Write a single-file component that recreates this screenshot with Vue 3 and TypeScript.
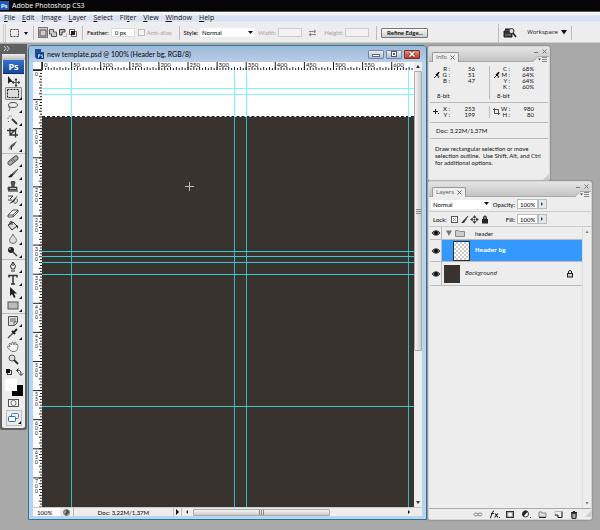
<script setup lang="ts">
import { ref } from 'vue'

interface Tool {
  name: string
  svg: string
  flyout?: boolean
}

const menus: [string, string, string][] = [
  ['', 'F', 'ile'],
  ['', 'E', 'dit'],
  ['', 'I', 'mage'],
  ['', 'L', 'ayer'],
  ['', 'S', 'elect'],
  ['Fil', 't', 'er'],
  ['', 'V', 'iew'],
  ['', 'W', 'indow'],
  ['', 'H', 'elp'],
]

const toolGroups: Tool[][] = [
  [
    { name: 'Move', svg: '<path d="M2 1v8l2-2 3 0z" fill="#222"/><path d="M10 4v7M6.500 7.500h7M10 3.500l-1 1.500h2zM10 11.500l-1-1.500h2zM6 7.500l1.500-1v2zM14 7.500l-1.500-1v2z" stroke="#333" fill="#333" stroke-width=".8"/>' },
    { name: 'Marquee', flyout: true, svg: '<rect x="1.500" y="1.500" width="11" height="8" fill="none" stroke="#222" stroke-dasharray="2 1"/>' },
    { name: 'Lasso', flyout: true, svg: '<ellipse cx="7" cy="4" rx="4.500" ry="2.500" fill="none" stroke="#555"/><path d="M3 5c-1 2 2 2 1 3s-1 1-1 2" fill="none" stroke="#444"/>' },
    { name: 'Quick Selection', flyout: true, svg: '<path d="M6 5l5 5" stroke="#333" stroke-width="1.800"/><path d="M2 5a3 3 0 0 1 4-3M2 7l1 1" fill="none" stroke="#666" stroke-dasharray="1.500 1"/>' },
    { name: 'Crop', svg: '<path d="M4 1v7h8M1 3.500h8.500v7M4 8l7-7" fill="none" stroke="#333" stroke-width="1.300"/>' },
    { name: 'Slice', flyout: true, svg: '<path d="M2 10l3-5 6-4-3 5z" fill="#555"/><path d="M2 10l5-4" stroke="#ddd" stroke-width=".7"/><path d="M6 6l-1 4" stroke="#222"/>' },
  ],
  [
    { name: 'Healing Brush', flyout: true, svg: '<path d="M4 8l6-5" stroke="#555" stroke-width="5" stroke-linecap="round"/><path d="M4 8l6-5" stroke="#aaa" stroke-width="3.200" stroke-linecap="round"/><path d="M5 5l3 3M7 4l2 3" stroke="#555" stroke-width=".8"/>' },
    { name: 'Brush', flyout: true, svg: '<path d="M12 1L6 6l1 1z" fill="#555" stroke="#555"/><path d="M6 6c-2 0-2 2-4 3 2 1 5 0 5-2z" fill="#222"/>' },
    { name: 'Clone Stamp', flyout: true, svg: '<path d="M5.500 3a2 2 0 1 1 3 0l-.5 3h3v3H2V6h4z" fill="#555" stroke="#222" stroke-width=".6"/><path d="M2 10h10" stroke="#222"/><path d="M4 7.500h6" stroke="#ccc"/>' },
    { name: 'History Brush', flyout: true, svg: '<path d="M12 1L6 7 3 10l5-2z" fill="#444"/><path d="M2 2h5l-3 3M2 6h4M8 9c3 1 4-2 3-4" fill="none" stroke="#444"/>' },
    { name: 'Eraser', flyout: true, svg: '<path d="M2 8l5-5h5L7 8zM2 8v2h5V8M7 10l5-5V3" fill="#eee" stroke="#444" stroke-width=".9"/>' },
    { name: 'Paint Bucket', flyout: true, svg: '<path d="M2 5l5-3 4 4-5 4z" fill="#ddd" stroke="#333"/><path d="M4 5V2c0-1 2-1 2 0v3" fill="none" stroke="#333"/><path d="M10 5c3 0 2 3 2 4l-2-3z" fill="#222"/>' },
    { name: 'Blur', flyout: true, svg: '<path d="M7 1C6 4 3.500 5 3.500 7.500a3.500 3 0 0 0 7 0C10.500 5 8 4 7 1z" fill="#ddd" stroke="#666" stroke-width=".9"/>' },
    { name: 'Dodge', flyout: true, svg: '<circle cx="5" cy="4" r="3" fill="#222"/><path d="M7 6l4 4" stroke="#444" stroke-width="1.500"/><circle cx="4" cy="3" r="1" fill="#999"/>' },
  ],
  [
    { name: 'Pen', flyout: true, svg: '<path d="M7 1L4.500 5l1 3h3l1-3z" fill="#eee" stroke="#333"/><path d="M7 1v4M5 10h4" stroke="#333"/>' },
    { name: 'Type', flyout: true, svg: '<path d="M3 3.500v-2h8v2M7 1.500v8.500M5 10h4" fill="none" stroke="#333" stroke-width="1.500"/>' },
    { name: 'Path Selection', flyout: true, svg: '<path d="M4 0v9l2-2 2 4 1.500-1L8 6.500h3z" fill="#222"/>' },
    { name: 'Rectangle', flyout: true, svg: '<rect x="2" y="2" width="10" height="7" fill="#bbb" stroke="#555"/>' },
  ],
  [
    { name: 'Notes', flyout: true, svg: '<path d="M2.500 1.500h9v6l-3 3h-6z" fill="#ddd" stroke="#555"/><path d="M4 4h6M4 6h6M8 10V7h3" stroke="#666" fill="none"/>' },
    { name: 'Eyedropper', flyout: true, svg: '<path d="M2 10l5-5" stroke="#555" stroke-width="1.500"/><path d="M6 3l3 3M8 4l3-3" stroke="#222" stroke-width="2"/>' },
    { name: 'Hand', svg: '<path d="M4 9C1 7 1 5 2 5l2 1-1-3 1-1 1.500 2L6 1h1l1 3 1-3 1 .5V4l1-1 1 1c0 4-1 6-3 6.500H6z" fill="#f4f4f4" stroke="#666" stroke-width=".8"/>' },
    { name: 'Zoom', svg: '<circle cx="6" cy="4" r="3" fill="#ddd" stroke="#555"/><path d="M8 6l4 4" stroke="#333" stroke-width="2"/>' },
  ],
]

const STEP = 29.1
const labels = (count: number) => Array.from({ length: count }, (_, i) => ({ at: i * STEP, label: String(i * 50) }))
const columnsMajor = labels(13)
const rowsMajor = labels(15)
const minors = Array.from({ length: 160 }, (_, i) => ({ at: (i * STEP) / 10, len: i % 2 ? 2 : 3 }))

const verticalGuides = [29, 192, 204, 366]
const horizontalGuides = [18, 24, 181, 186, 192, 204, 336]

const footIcons: Tool[] = [
  { name: 'Link layers', svg: '<path d="M1 5.500a2 1.500 0 1 0 4 0a2 1.500 0 1 0-4 0M5 5.500a2 1.500 0 1 0 4 0a2 1.500 0 1 0-4 0" fill="none" stroke="#888"/>' },
  { name: 'Layer style', svg: '<path d="M1 9c1.500 0 1.500-7 4-7M2 4.500h3M6 4.500l3 4M9 4.500l-3.500 4" fill="none" stroke="#222" stroke-width="1.100"/><rect x="10" y="8" width="1" height="1" fill="#222"/>' },
  { name: 'Layer mask', svg: '<rect x="1.500" y="2.500" width="7" height="6" fill="#999" stroke="#333"/><circle cx="5" cy="5.500" r="2" fill="#fff"/>' },
  { name: 'Adjustment layer', svg: '<circle cx="4.500" cy="5" r="3" fill="#fff" stroke="#333"/><path d="M6.800 2.500A3.300 3.300 0 0 0 2.500 7.500z" fill="#222"/><rect x="9" y="8" width="1" height="1" fill="#222"/>' },
  { name: 'New group', svg: '<path d="M2 3h3v1h4v4H2z" fill="#ddd" stroke="#888"/><path d="M2 8.500h7" stroke="#222"/>' },
  { name: 'New layer', svg: '<path d="M2 2.500h7v6H5L2 6z" fill="#eee" stroke="#bbb"/><path d="M2 6h3v2.500h4v-6" fill="none" stroke="#222"/>' },
  { name: 'Delete layer', svg: '<path d="M2 3.500h6M4 2.500h2" stroke="#222"/><path d="M2.500 4.500h5l-.5 5H3z" fill="#777" stroke="#333"/><path d="M5 5v4" stroke="#ddd"/>' },
]

const modes: Tool[] = [
  { name: 'New selection', svg: '<rect x="2" y="2" width="6" height="6" fill="#ccc" stroke="#555"/>' },
  { name: 'Add to selection', svg: '<path d="M1.500 1.500h4v2.500h3v4.500h-5V6h-2z" fill="#ccc" stroke="#555"/>' },
  { name: 'Subtract from selection', svg: '<path d="M1.500 7V1.500H7V4H4v3z" fill="#bbb" stroke="#444"/><path d="M5 8.500h3.500V5" fill="none" stroke="#bbb"/>' },
  { name: 'Intersect selection', svg: '<path d="M1.500 1.500h5v5h-5zM3.500 3.500h5v5h-5z" fill="none" stroke="#666"/><rect x="3" y="3" width="4" height="4" fill="#222"/>' },
]

const eye = '<path d="M1 4c2-3 6-3 8 0-2 3-6 3-8 0z" fill="#777" stroke="#222" stroke-width=".8"/><circle cx="5" cy="4" r="2" fill="#111"/>'

const feather = ref('0 px')
const opacity = ref('100%')
const fill = ref('100%')
</script>

<template>
  <div class="app">
    <header class="titlebar">
      <svg class="logo" width="9" height="9" viewBox="0 0 9 9"><rect width="9" height="9" fill="#1e5cb3" /><text x="1" y="7" font-size="6" fill="#fff">Ps</text></svg>
      <h1>Adobe Photoshop CS3</h1>
    </header>

    <nav class="menubar">
      <a v-for="m in menus" :key="m.join('')" href="#">{{ m[0] }}<u>{{ m[1] }}</u>{{ m[2] }}</a>
    </nav>

    <section class="options">
      <i class="grip"></i>
      <button class="preset" aria-label="Tool preset">
        <svg width="20" height="10" viewBox="0 0 20 10"><rect x="1.500" y="1.500" width="8" height="7" fill="none" stroke="#444" stroke-dasharray="2 1" /><path d="M15 4h4l-2 3z" fill="#111" /></svg>
      </button>
      <i class="rule"></i>
      <div class="modes">
        <button v-for="(m, i) in modes" :key="m.name" :class="{ on: i === 0 }" :aria-label="m.name"><svg width="10" height="10" viewBox="0 0 10 10" v-html="m.svg"></svg></button>
      </div>
      <i class="rule"></i>
      <label class="field">Feather: <input v-model="feather" class="box" /></label>
      <label class="field dim"><input type="checkbox" disabled /> Anti-alias</label>
      <i class="rule"></i>
      <label class="field">Style:
        <span class="pick"><select><option>Normal</option></select><svg width="6" height="4" viewBox="0 0 6 4"><path d="M1 0h5L3.500 3z" fill="#111" /></svg></span>
      </label>
      <label class="field dim">Width: <input class="box off" disabled /></label>
      <button class="swap" aria-label="Swap width and height"><svg width="9" height="8" viewBox="0 0 9 8"><path d="M1 2.500h6M2 5.500h6M6 1l2 1.500L6 4M3 4L1 5.500 3 7" fill="none" stroke="#888" /></svg></button>
      <label class="field dim">Height: <input class="box off" disabled /></label>
      <i class="rule"></i>
      <button class="refine">Refine Edge...</button>
      <i class="rule push"></i>
      <button class="bridge" aria-label="Go to Bridge"><svg width="14" height="12" viewBox="0 0 14 12"><path d="M1 4h8v6H1z" fill="#333" stroke="#222" /><path d="M2 2.500h5" stroke="#222" stroke-width="2" /><path d="M2 8h6" stroke="#888" /><circle cx="8.500" cy="4" r="2.500" fill="#ddd" stroke="#333" /><path d="M10 6l3 4" stroke="#222" stroke-width="1.500" /></svg></button>
      <button class="workspace-menu">Workspace <svg width="6" height="5" viewBox="0 0 6 5"><path d="M0 0h6L3 4.500z" fill="#111" /></svg></button>
      <i class="rule last"></i>
    </section>

    <main class="desk">
      <aside class="tools">
        <div class="tools-head"><svg width="8" height="5" viewBox="0 0 8 5"><path d="M1 0l2 2.500L1 5M4 0l2 2.500L4 5" fill="none" stroke="#ddd" /></svg></div>
        <div class="tools-body">
          <div class="tools-grip"></div>
          <div class="ps">Ps</div>
          <div v-for="(group, g) in toolGroups" :key="g" class="group">
            <button v-for="t in group" :key="t.name" :aria-label="t.name" :class="{ on: t.name === 'Marquee' }">
              <svg width="18" height="12" viewBox="0 0 18 12"><g transform="translate(1 0)" v-html="t.svg"></g><path v-if="t.flyout" d="M17 9v3h-3z" fill="#111" /></svg>
            </button>
          </div>
          <svg class="colors" width="20" height="31" viewBox="0 0 20 31">
            <rect x="3.500" y="4.500" width="4" height="4" fill="#fff" stroke="#444" /><rect x="2" y="3" width="4" height="4" fill="#111" />
            <path d="M13 4.500c3-1 4 1 4 4M14.500 2.500l-2 2 2 2M15 7.500l2 2 2-2" fill="none" stroke="#222" />
            <rect x="8" y="19" width="11" height="11" fill="#000" /><rect x="1" y="13" width="12" height="12" fill="#fff" />
          </svg>
          <button class="mask" aria-label="Quick mask"><svg width="12" height="9" viewBox="0 0 12 9"><rect x=".5" y=".5" width="10" height="7" fill="#eee" stroke="#555" /><circle cx="5.500" cy="4" r="2.500" fill="#fff" stroke="#777" /></svg></button>
          <button class="screen" aria-label="Screen mode"><svg width="14" height="12" viewBox="0 0 14 12"><rect x="4.500" y="1.500" width="7" height="5" rx="1" fill="#e5f0fa" stroke="#4585bd" /><rect x="1.500" y="4.500" width="7" height="5" rx="1" fill="#fff" stroke="#2869a8" /><path d="M14 9v3h-3z" fill="#111" /></svg></button>
        </div>
      </aside>

      <section class="doc">
        <div class="doc-title">
          <svg width="11" height="11" viewBox="0 0 11 11"><path d="M1 0h6v3h3v7H3L1 8z" fill="#164f9c" /><rect x="3" y="4" width="7" height="6" fill="#0c3d80" /><path d="M4.500 9V5.500h1.500v1.500H4.500M9 6H7.500v1h1v1.500h-1" fill="none" stroke="#cfe4ff" stroke-width=".8" /></svg>
          <h2>new template.psd @ 100% (Header bg, RGB/8)</h2>
          <div class="win-buttons">
            <button aria-label="Minimise"><svg width="14" height="8" viewBox="0 0 14 8"><rect x="3.500" y="4.500" width="7" height="2" fill="#fff" stroke="#667" /></svg></button>
            <button aria-label="Maximise"><svg width="14" height="8" viewBox="0 0 14 8"><rect x="4.500" y="1.500" width="5" height="5" fill="#fff" stroke="#556" /><rect x="6" y="3" width="2" height="2" fill="#556" /></svg></button>
            <button class="close" aria-label="Close"><svg width="14" height="8" viewBox="0 0 14 8"><path d="M4.500 1.500l5 5M9.500 1.500l-5 5" stroke="#622" stroke-width="3" /><path d="M4.500 1.500l5 5M9.500 1.500l-5 5" stroke="#fff" stroke-width="1.700" /></svg></button>
          </div>
        </div>
        <div class="doc-body">
          <div class="corner"></div>
          <div class="ruler-x">
            <svg width="100%" height="8">
              <path v-for="m in minors" :key="m.at" :d="`M${m.at + 0.5} ${8 - m.len}V8`" stroke="#222" />
              <g v-for="m in columnsMajor" :key="m.label"><path :d="`M${m.at + 0.5} 0V8`" stroke="#222" /><text :x="m.at + 2" y="5">{{ m.label }}</text></g>
            </svg>
          </div>
          <div class="ruler-y">
            <svg width="9" height="100%">
              <path v-for="m in minors" :key="m.at" :d="`M${9 - m.len} ${m.at + 0.5}H9`" stroke="#222" />
              <g v-for="m in rowsMajor" :key="m.label">
                <path :d="`M0 ${m.at + 0.5}H9`" stroke="#222" />
                <text :y="m.at + 1"><tspan v-for="(c, i) in m.label" :key="i" x="2" dy="5">{{ c }}</tspan></text>
              </g>
            </svg>
          </div>
          <div class="canvas">
            <div class="selection"></div>
            <i v-for="x in verticalGuides" :key="'v' + x" class="guide v" :style="{ left: x + 'px' }"></i>
            <i v-for="y in horizontalGuides" :key="'h' + y" class="guide h" :style="{ top: y + 'px' }"></i>
            <svg class="cross" width="9" height="9" viewBox="0 0 9 9"><path d="M4.500 0v9M0 4.500h9" stroke="#bbb" /></svg>
          </div>
          <div class="scroll-y">
            <svg width="8" height="9" viewBox="0 0 8 9"><path d="M2 6h4L4 3z" fill="#333" /></svg>
            <div class="thumb"><svg width="5" height="5" viewBox="0 0 5 5"><path d="M0 .5h5M0 2.500h5M0 4.500h5" stroke="#888" /></svg></div>
            <svg class="end" width="8" height="9" viewBox="0 0 8 9"><path d="M2 3h4L4 6z" fill="#333" /></svg>
          </div>
          <div class="status">
            <span class="zoom">100%</span>
            <span class="drive"><svg width="7" height="7" viewBox="0 0 7 7"><circle cx="3.500" cy="3.500" r="3" fill="#999" stroke="#777" /><path d="M3 2h2v2H3v2" stroke="#222" fill="none" /></svg></span>
            <span class="size">Doc: 3,22M/1,37M</span>
            <button class="play" aria-label="Status options"><svg width="5" height="6" viewBox="0 0 5 6"><path d="M1 0v6l3-3z" fill="#000" /></svg></button>
            <div class="scroll-x">
              <svg width="11" height="8" viewBox="0 0 11 8"><path d="M6 2v4L4 4z" fill="#333" /></svg>
              <div class="thumb"><svg width="5" height="5" viewBox="0 0 5 5"><path d="M.5 0v5M2.500 0v5M4.500 0v5" stroke="#888" /></svg></div>
              <svg class="end" width="11" height="8" viewBox="0 0 11 8"><path d="M5 2v4l2-2z" fill="#111" /></svg>
            </div>
          </div>
        </div>
      </section>

      <aside class="panels">
        <section class="panel info">
          <div class="panel-top">
            <h3>Info <svg width="5" height="5" viewBox="0 0 5 5"><path d="M.5 .5l4 4M4.500 .5l-4 4" stroke="#666" /></svg></h3>
            <svg width="16" height="15" viewBox="0 0 16 15"><path d="M1 5.500h4M9.500 2.500l4 4M13.500 2.500l-4 4" stroke="#777" /><path d="M0 15L5 9.500h11V15z" fill="#ededed" /><path d="M0 14.500L5 9.500h11" fill="none" stroke="#aaa" /><path d="M5 11.500h3l-1.500 2z" fill="#444" /><path d="M9 10.500h5M9 12.500h5M9 14.500h5" stroke="#888" /></svg>
          </div>
          <div class="readout colour">
            <div class="cell">
              <svg width="7" height="7" viewBox="0 0 7 7"><path d="M1 6l3-3M5 6l1-2" stroke="#333" /><path d="M3 2l2 2M4 3l2-3" stroke="#111" stroke-width="1.500" /></svg>
              <dl><dt>R :</dt><dd>56</dd><dt>G :</dt><dd>51</dd><dt>B :</dt><dd>47</dd></dl>
              <p>8-bit</p>
            </div>
            <div class="cell">
              <svg width="7" height="7" viewBox="0 0 7 7"><path d="M1 6l3-3M5 6l1-2" stroke="#333" /><path d="M3 2l2 2M4 3l2-3" stroke="#111" stroke-width="1.500" /></svg>
              <dl><dt>C :</dt><dd>68%</dd><dt>M :</dt><dd>64%</dd><dt>Y :</dt><dd>64%</dd><dt>K :</dt><dd>60%</dd></dl>
              <p>8-bit</p>
            </div>
          </div>
          <div class="readout place">
            <div class="cell">
              <svg width="7" height="7" viewBox="0 0 7 7"><path d="M2.500 1v5M0 3.500h5" stroke="#222" /><rect x="5" y="5" width="1" height="1" fill="#222" /></svg>
              <dl><dt>X :</dt><dd>253</dd><dt>Y :</dt><dd>199</dd></dl>
            </div>
            <div class="cell">
              <svg width="7" height="7" viewBox="0 0 7 7"><path d="M1.500 0v5.500H7M0 1.500h5.500V7" fill="none" stroke="#555" /></svg>
              <dl><dt>W :</dt><dd>980</dd><dt>H :</dt><dd>80</dd></dl>
            </div>
          </div>
          <p class="doc-size">Doc: 3,22M/1,37M</p>
          <p class="hint">Draw rectangular selection or move selection outline.&nbsp; Use Shift, Alt, and Ctrl for additional options.</p>
          <svg class="resize" width="6" height="6" viewBox="0 0 6 6"><path d="M0 6l6-6v6z" fill="#ccc" /></svg>
        </section>

        <section class="panel layers">
          <div class="panel-top">
            <h3>Layers <svg width="5" height="5" viewBox="0 0 5 5"><path d="M.5 .5l4 4M4.500 .5l-4 4" stroke="#666" /></svg></h3>
            <svg width="16" height="15" viewBox="0 0 16 15"><path d="M1 5.500h4M9.500 2.500l4 4M13.500 2.500l-4 4" stroke="#777" /><path d="M0 15L5 9.500h11V15z" fill="#ededed" /><path d="M0 14.500L5 9.500h11" fill="none" stroke="#aaa" /><path d="M5 11.500h3l-1.500 2z" fill="#444" /><path d="M9 10.500h5M9 12.500h5M9 14.500h5" stroke="#888" /></svg>
          </div>
          <div class="line">
            <span class="pick wide"><select aria-label="Blend mode"><option>Normal</option></select><svg width="6" height="4" viewBox="0 0 6 4"><path d="M1 0h5L3.500 3z" fill="#111" /></svg></span>
            <label class="amount">Opacity: <input v-model="opacity" /></label>
            <button class="step" aria-label="Opacity slider"><svg width="3" height="4" viewBox="0 0 3 4"><path d="M0 0v4l2-2z" fill="#347" /></svg></button>
          </div>
          <div class="line">
            <span class="lock">Lock:</span>
            <svg width="38" height="9" viewBox="0 0 38 9">
              <rect x="1.500" y="1.500" width="6" height="6" fill="#fff" stroke="#555" /><path d="M3 3h1v1H3zM5 3h1v1H5zM4 4h1v1H4zM3 5h1v1H3zM5 5h1v1H5z" fill="#999" />
              <path d="M18 1l-4 4 1 1z" fill="#555" stroke="#555" /><path d="M14 5c-1 0-1 2-3 3 2 0 4 0 4-2z" fill="#222" />
              <path d="M24.500 1v7M21 4.500h7M23 2.500l1.500-2 1.500 2zM23 6.500l1.500 2 1.500-2zM22.500 3l-2 1.500 2 1.500zM26.500 3l2 1.500-2 1.500z" fill="#333" stroke="#333" stroke-width=".5" />
              <rect x="32" y="4" width="6" height="4.500" fill="#222" /><path d="M33.500 4V2.500a1.500 1.500 0 0 1 3 0V4" fill="#777" stroke="#222" />
            </svg>
            <label class="amount">Fill: <input v-model="fill" /></label>
            <button class="step" aria-label="Fill slider"><svg width="3" height="4" viewBox="0 0 3 4"><path d="M0 0v4l2-2z" fill="#347" /></svg></button>
          </div>
          <div class="stack">
            <ul>
              <li class="folder">
                <button aria-label="Toggle header"><svg width="10" height="8" viewBox="0 0 10 8" v-html="eye"></svg></button>
                <div><svg width="20" height="9" viewBox="0 0 20 9"><path d="M0 1.500h6L3 7z" fill="#777" /><path d="M9.500 7.500v-6h3l1 1h5v5z" fill="#ccc" stroke="#888" /></svg><span>header</span></div>
              </li>
              <li class="active">
                <button aria-label="Toggle Header bg"><svg width="10" height="8" viewBox="0 0 10 8" v-html="eye"></svg></button>
                <div><i class="thumbnail checker"></i><span>Header bg</span></div>
              </li>
              <li class="back">
                <button aria-label="Toggle Background"><svg width="10" height="8" viewBox="0 0 10 8" v-html="eye"></svg></button>
                <div><i class="thumbnail"></i><span>Background</span><svg class="padlock" width="6" height="8" viewBox="0 0 6 8"><rect x=".5" y="3.500" width="5" height="3.500" fill="#ccc" stroke="#222" /><path d="M1.500 3.500V2a1.500 1.500 0 0 1 3 0v1.500" fill="none" stroke="#222" /></svg></div>
              </li>
            </ul>
            <div class="stack-scroll">
              <svg width="8" height="10" viewBox="0 0 8 10"><path d="M2.500 6h3L4 3.500z" fill="#777" /></svg>
              <svg width="8" height="10" viewBox="0 0 8 10"><path d="M2.500 4h3L4 6.500z" fill="#777" /></svg>
            </div>
          </div>
          <footer>
            <button v-for="f in footIcons" :key="f.name" :aria-label="f.name"><svg width="11" height="10" viewBox="0 0 11 10" v-html="f.svg"></svg></button>
            <svg width="6" height="6" viewBox="0 0 6 6"><path d="M0 6l6-6v6z" fill="#ccc" /></svg>
          </footer>
        </section>
      </aside>
    </main>
  </div>
</template>

<style>
body { margin: 0; background: #a9a9a9; }
</style>

<style scoped>
* { box-sizing: border-box; }
.app { min-height: 100vh; display: flex; flex-direction: column; font: 500 6px/7px Lato, "Open Sans", sans-serif; color: #111; background: #a9a9a9; }
h1, h2, h3, p, ul, dl, dd { margin: 0; padding: 0; font-weight: 400; }
button { border: 0; padding: 0; background: none; font: inherit; color: inherit; display: flex; align-items: center; justify-content: center; }
input, select { font: inherit; color: inherit; margin: 0; padding: 0 3px; min-width: 0; border: 1px solid #ddd; background: #fff; border-radius: 0; }
svg { display: block; flex: none; }

.titlebar { height: 12px; display: flex; align-items: center; gap: 3px; background: #050505; border-bottom: 1px solid #555; color: #fff; }
.titlebar h1 { font-family: "Open Sans", sans-serif; font-size: 7px; line-height: 10px; font-weight: 500; }
.logo { font-weight: 700; }
.menubar { height: 11px; display: flex; align-items: center; gap: 7px; padding-left: 4px; background: linear-gradient(#fff, #dbe2f4 40%, #dbe2f4 85%, #f4f6fc); }
.menubar a { color: #111; text-decoration: none; font: 500 7px/10px "Open Sans", sans-serif; }
.options { height: 20px; display: flex; align-items: center; padding-left: 3px; background: #ededed; border-bottom: 1px solid #ccc; }
.grip { width: 3px; height: 18px; border: solid #ccc; border-width: 0 1px; margin-right: 3px; }
.rule { width: 1px; height: 14px; background: #bbb; margin: 0 4px; }
.push { margin-left: auto; height: 18px; }
.last { margin: 0 28px 0 4px; }
.modes { display: flex; }
.modes button { height: 11px; }
.modes .on { background: #ccc; outline: 1px solid #777; outline-offset: -1px; }
.field { display: flex; align-items: center; gap: 2px; margin-right: 3px; white-space: nowrap; }
.box { width: 24px; height: 9px; }
.off { background: #f2f2f2; border-color: #ccc; }
.dim { color: #aaa; }
.field input[type="checkbox"] { appearance: none; width: 7px; height: 7px; padding: 0; border-color: #bbb; background: #f4f4f4; }
.pick { display: grid; width: 55px; height: 9px; align-items: center; }
.pick select { grid-area: 1 / 1; appearance: none; border: 0; width: 100%; height: 9px; padding: 0 2px; }
.pick svg { grid-area: 1 / 1; justify-self: end; margin-right: 2px; pointer-events: none; }
.swap { margin: 0 7px 0 3px; }
.refine { border: 1px solid #777; border-radius: 1px; height: 10px; width: 47px; background: linear-gradient(#fafafa, #ccc); font-weight: 700; }
.workspace-menu { gap: 3px; margin-left: 10px; font-family: "Open Sans", sans-serif; }

.desk { flex: 1; display: flex; align-items: flex-start; padding: 1px 8px 10px 0; }
.tools { width: 27px; flex: none; background: #606060; padding: 0 2px 2px; border-radius: 0 0 2px 2px; }
.tools-head { height: 10px; padding: 2px 1px; }
.tools-body { background: #ececec; display: flex; flex-direction: column; align-items: center; padding-bottom: 2px; border-radius: 2px; }
.tools-grip { align-self: stretch; height: 6px; background: linear-gradient(#eee, #bbb); }
.ps { width: 21px; height: 14px; background: linear-gradient(#3472cc, #174a9c); border-bottom: 1px solid #0c2d6a; color: #fff; font: 700 9px/13px "Open Sans", sans-serif; text-align: center; }
.group { align-self: stretch; display: flex; flex-direction: column; padding: 0 1px; }
.group + .group { border-top: 1px solid #bbb; margin-top: 1px; }
.group button { height: 13px; }
.group .on { border: 1px solid #888; border-radius: 1px; background: #ddd; margin: 0 2px; }
.mask { height: 13px; }
.screen { height: 16px; width: 16px; border: 1px solid #bbb; }

.doc { flex: 1; min-width: 0; align-self: stretch; margin: 1px 1px 0; display: flex; flex-direction: column; border: 1px solid #1e7b90; border-radius: 4px 4px 0 0; background: #bcd2ee; padding: 0 4px 3px; }
.doc-title { height: 16px; display: flex; align-items: center; gap: 2px; margin: 0 -4px; padding: 0 6px 0 5px; border-radius: 3px 3px 0 0; background: linear-gradient(#9db8d8, #b8cee8); }
.doc-title h2 { flex: 1; font-size: 7px; line-height: 10px; font-weight: 500; white-space: nowrap; }
.win-buttons { display: flex; gap: 2px; }
.win-buttons button { width: 16px; height: 9px; border: 1px solid #7488a3; border-radius: 1px; background: linear-gradient(#e4edf7, #a9c0dc); }
.win-buttons .close { background: linear-gradient(#e5907f, #c23a20); border-color: #7c2f27; }
.doc-body { flex: 1; display: grid; grid-template: 8px 1fr 9px / 9px minmax(0, 1fr) 8px; }
.corner { background: #fff; border: solid #555; border-width: 0 1px 1px 0; }
.ruler-x { background: #fff; overflow: hidden; }
.ruler-y { background: #fff; overflow: hidden; contain: size; }
.ruler-x text { font: 6px Lato, sans-serif; fill: #111; }
.ruler-y text { font: 5px Lato, sans-serif; fill: #111; }
.canvas { position: relative; display: flex; flex-direction: column; background: #38332f; overflow: hidden; }
.selection { height: 47px; background: #fff; border-bottom: 1px dashed #222; }
.guide { position: absolute; background: #3cc9cd; }
.v { top: 0; bottom: 0; width: 1px; background: linear-gradient(#7cf6f6 47px, #36b9bd 47px); }
.h { left: 0; right: 0; height: 1px; }
.guide.h:nth-of-type(5), .guide.h:nth-of-type(6) { background: #7cf6f6; }
.cross { position: absolute; left: 143px; top: 112px; }
.scroll-y { grid-row: 1 / 3; grid-column: 3; display: flex; flex-direction: column; background: #ededed; }
.thumb { display: flex; align-items: center; justify-content: center; border: 1px solid #aaa; border-radius: 1px; background: linear-gradient(90deg, #f5f5f5, #ccc); }
.scroll-y .thumb { height: 63%; }
.end { margin-top: auto; }
.status { grid-column: 1 / 4; display: flex; align-items: center; background: #ededed; border-top: 1px solid #ccc; }
.status > * { align-self: stretch; display: flex; align-items: center; }
.zoom { width: 27px; padding-left: 4px; background: #fff; }
.drive { width: 14px; justify-content: center; border-right: 1px solid #bbb; }
.size { width: 99px; justify-content: center; }
.play { width: 9px; border: solid #bbb; border-width: 0 1px; }
.scroll-x { flex: 1; padding-right: 8px; }
.scroll-x .thumb { height: 7px; width: 59%; background: linear-gradient(#f5f5f5, #ccc); }
.scroll-x .end { margin: 0 0 0 auto; }

.panels { width: 164px; flex: none; align-self: stretch; display: flex; flex-direction: column; padding-top: 2px; }
.panel { background: #ededed; border: 1px solid #d4d4d4; border-radius: 2px; box-shadow: 0 0 2px #666; }
.panel-top { height: 15px; display: flex; align-items: flex-end; justify-content: space-between; padding-left: 3px; background: linear-gradient(#e4e4e4, #c4c4c4); border-bottom: 1px solid #aaa; }
.panel-top > svg { margin-bottom: -1px; }
h3 { display: flex; align-items: center; gap: 3px; height: 10px; padding: 0 3px; margin-bottom: -1px; background: #ededed; border: 1px solid #999; border-bottom: 0; border-radius: 2px 2px 0 0; color: #555; font: 6px/9px "Open Sans", sans-serif; }
.info { width: 122px; height: 135px; display: flex; flex-direction: column; }
.readout { display: grid; grid-template-columns: 1fr 1fr; margin: 0 1px; border-bottom: 1px solid #bbb; line-height: 6px; }
.cell { display: grid; grid-template: auto 1fr / 8px 1fr; margin: 4px 0 3px; padding: 0 14px 0 3px; }
.cell + .cell { border-left: 1px solid #bbb; }
.cell svg { margin-top: 6px; }
.place .cell { margin: 3px 0 4px; }
.place .cell svg { margin-top: 2px; }
dl { display: grid; grid-template-columns: 9px 1fr; text-align: right; white-space: nowrap; }
.cell p { grid-column: 1 / 3; padding-left: 4px; align-self: end; }
.colour .cell { height: 33px; }
.doc-size { padding: 4px 6px; margin: 0 1px; border-bottom: 1px solid #bbb; }
.hint { padding: 6px 8px 0 6px; }
.resize { margin: auto 0 0 auto; }
.layers { flex: 1; display: flex; flex-direction: column; position: relative; }
.line { height: 15px; display: flex; align-items: center; padding: 0 44px 0 2px; border-bottom: 1px solid #ccc; }
.wide { width: 60px; }
.lock { width: 19px; padding-left: 2px; }
.amount { margin-left: auto; display: flex; align-items: center; gap: 2px; white-space: nowrap; }
.amount input { width: 21px; height: 10px; padding: 0 2px; border-color: #bbb; }
.step { width: 9px; height: 10px; border: 1px solid #bbb; background: #e3e8f0; flex: none; }
.stack { flex: 1; display: flex; }
.stack ul { flex: 1; list-style: none; margin-left: 1px; }
.stack li { display: flex; border-bottom: 1px solid #bbb; }
.stack li button { width: 12px; border-right: 1px solid #bbb; }
.stack li div { flex: 1; display: flex; align-items: center; }
.folder { height: 13px; }
.folder div { padding-left: 4px; gap: 9px; }
.active { height: 22px; }
.active div { background: #3399ff; color: #fff; font-weight: 700; font-family: "Open Sans", sans-serif; padding-left: 11px; gap: 5px; }
.back { height: 24px; }
.back div { padding: 0 9px 0 2px; gap: 5px; font-style: italic; font-family: "Open Sans", sans-serif; }
.thumbnail { width: 16px; height: 18px; background: #38332f; }
.checker { width: 17px; height: 20px; border: 1px solid #333; background: repeating-conic-gradient(#ccc 0 25%, #fff 0 50%) 0 0 / 4px 4px; }
.padlock { margin-left: auto; }
.stack-scroll { width: 9px; display: flex; flex-direction: column; justify-content: space-between; border-left: 1px solid #ddd; }
footer { height: 11px; display: flex; align-items: center; justify-content: flex-end; gap: 5px; border-top: 1px solid #aaa; }
</style>
